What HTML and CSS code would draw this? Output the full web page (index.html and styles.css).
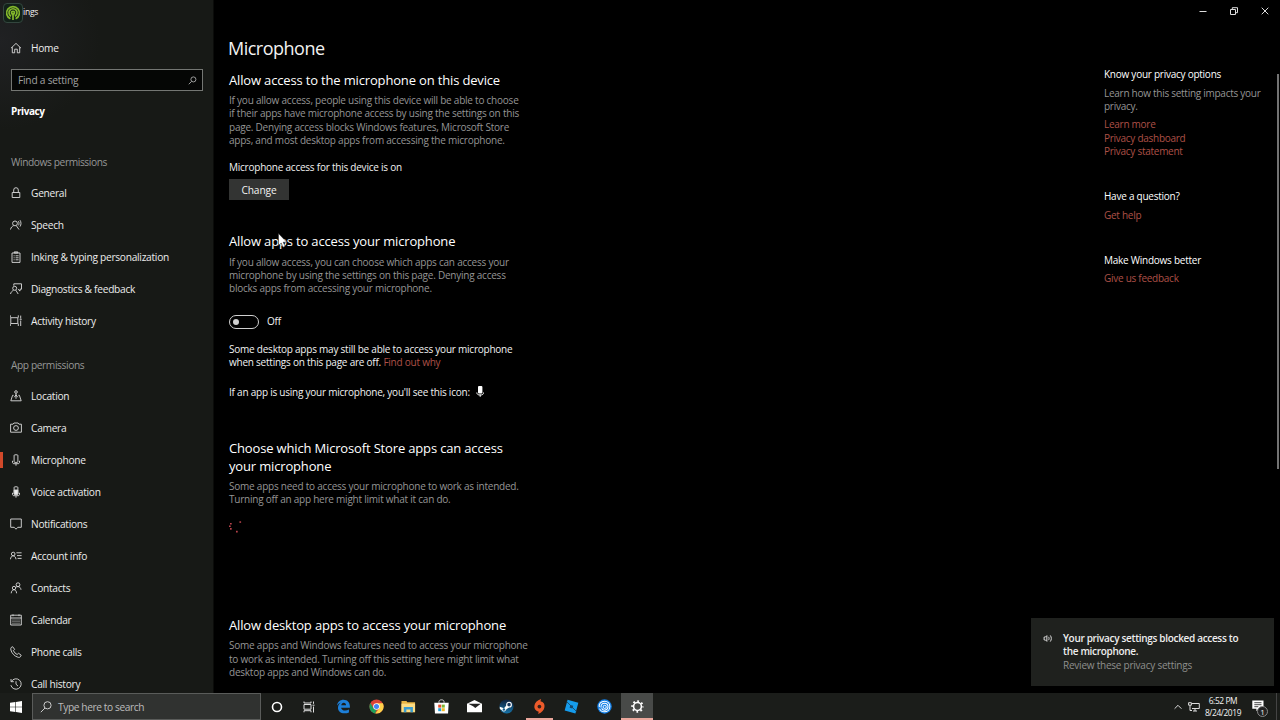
FILE: index.html
```html
<!DOCTYPE html>
<html lang="en">

<head>
    <meta charset="UTF-8">
    <meta name="viewport" content="width=device-width, initial-scale=1.0">
    <title>Settings</title>
    <link rel="stylesheet" href="styles.css">
</head>

<body>
    <div class="window">
        <nav class="sidebar">
            <div class="app-title">
                <svg class="badge" viewBox="0 0 20 20" fill="none">
                    <rect x=".5" y=".5" width="19" height="19" rx="3.5" fill="#122119" stroke="#33463e"/>
                    <g stroke="#83b72b" stroke-width="1.7">
                        <path d="M7.4 15.8a6.4 6.4 0 1 1 5.2 0"/>
                        <path d="M8 13.2a4 4 0 1 1 4 0"/>
                        <circle cx="10" cy="9.8" r="1.5"/>
                        <path d="M10 10v7"/>
                    </g>
                </svg>
                <span>ings</span>
            </div>

            <div class="nav-item home">
                <svg viewBox="0 0 12 12"><path d="M1 6.2 6 1.4l5 4.8M2.3 5.2v5.6h2.4V7.2h2.6v3.6h2.4V5.2"/></svg>
                <span>Home</span>
            </div>

            <div class="search">
                <span>Find a setting</span>
                <svg viewBox="0 0 10 10"><circle cx="6" cy="3.8" r="2.8"/><path d="M4 6 .8 9.2"/></svg>
            </div>

            <div class="category">Privacy</div>

            <div class="group">Windows permissions</div>
            <div class="nav-item">
                <svg viewBox="0 0 12 12"><path d="M2.2 5.5h7.6v5H2.2zM3.7 5.5V3a2.3 2.3 0 0 1 4.6 0v2.5"/></svg>
                <span>General</span>
            </div>
            <div class="nav-item">
                <svg viewBox="0 0 12 12"><circle cx="5" cy="4.4" r="2.4"/><path d="M.5 10.5c.5-2.2 1.7-3.2 3-3.7M6.4 6.8 9 10.5M8.4 2.2c.8 1.2.8 3 0 4.2M10 1.2c1.3 1.8 1.3 4.6 0 6.4"/></svg>
                <span>Speech</span>
            </div>
            <div class="nav-item">
                <svg viewBox="0 0 12 12"><path d="M2 2h8v9.4H2zM4.2 2V.9h3.6V2zM3.6 4.8h1M5.6 4.8h3M3.6 6.8h1M5.6 6.8h3M3.6 8.8h1M5.6 8.8h3"/></svg>
                <span>Inking &amp; typing personalization</span>
            </div>
            <div class="nav-item">
                <svg viewBox="0 0 12 12"><path d="M3.8 2.7V.8h7.7v5.4H10v1.9L8 6.2"/><circle cx="4.7" cy="5.3" r="2"/><path d="M.5 11c.5-2 1.6-3 3-3.7M5.8 7.2 8.2 11"/></svg>
                <span>Diagnostics &amp; feedback</span>
            </div>
            <div class="nav-item">
                <svg viewBox="0 0 12 12"><path d="M.8 2.7h7v5.8h-7zM.3.3v2.4M8.300.3v2.400M.3 8.500v2.500M8.300 8.500v2.500M10.700.6v3M10.700 5.500v5.500M9.700 4.300h2"/></svg>
                <span>Activity history</span>
            </div>

            <div class="group">App permissions</div>
            <div class="nav-item">
                <svg viewBox="0 0 12 12"><circle cx="6" cy="2" r="1.3"/><path d="M6 3.3v5.500M3.600 5.300h-1l-1.800 5.500h10.400L9.400 5.300h-1M4.300 7.200 6 4.800l1.700 2.400"/></svg>
                <span>Location</span>
            </div>
            <div class="nav-item">
                <svg viewBox="0 0 12 12"><path d="M.6 2.2h2.500l.8-1.200h4.200l.8 1.200h2.500v8H.6z"/><circle cx="6" cy="6" r="2.4"/></svg>
                <span>Camera</span>
            </div>
            <div class="nav-item active">
                <svg viewBox="0 0 12 12"><rect x="4.1" y=".8" width="3.8" height="7.6" rx=".8"/><path d="M2.5 6.8v1.4c0 1 .6 1.5 1.5 1.5h4c.9 0 1.5-.5 1.5-1.5V6.8M6 9.7v2"/></svg>
                <span>Microphone</span>
            </div>
            <div class="nav-item">
                <svg viewBox="0 0 12 12"><rect x="4.1" y=".8" width="3.8" height="7.6" rx=".8"/><path d="M4.2 4h3.6v4.2H4.2z" fill="#eee"/><path d="M2.5 6.8v1.4c0 1 .6 1.5 1.5 1.5h4c.9 0 1.5-.5 1.5-1.5V6.8M6 9.7v2"/></svg>
                <span>Voice activation</span>
            </div>
            <div class="nav-item">
                <svg viewBox="0 0 12 12"><path d="M.7 1h10.600v8.300H7.800L6 11.200 4.200 9.300H.7z"/></svg>
                <span>Notifications</span>
            </div>
            <div class="nav-item">
                <svg viewBox="0 0 12 12"><circle cx="3.2" cy="4" r="1.8"/><path d="M.4 9.300c.3-2 1.200-3.500 2.800-3.500S5.700 7.300 6 9.300M6.400 2.800h5.200M7 5.600h4.600M7.600 8.400h4"/></svg>
                <span>Account info</span>
            </div>
            <div class="nav-item">
                <svg viewBox="0 0 12 12"><circle cx="4" cy="6" r="1.7"/><circle cx="8" cy="2.7" r="1.9"/><path d="M1.2 11.3c.2-2.200 1.200-3.600 2.800-3.600s2.400 1.400 2.600 3.600M5.800 5.300C6.400 4.800 7.200 4.600 8 4.600c1.700 0 2.700 1.200 3 3.200"/></svg>
                <span>Contacts</span>
            </div>
            <div class="nav-item">
                <svg viewBox="0 0 12 12"><path d="M.7 1.200h10.600v9.800H.7zM.7 4h10.600M3 .4v1.800M9 .4v1.800"/><path d="M2 6h8M2 7.700h8M2 9.300h8" opacity=".5"/></svg>
                <span>Calendar</span>
            </div>
            <div class="nav-item">
                <svg viewBox="0 0 12 12"><path d="M1.200 1.500 2.600.7l2 2.600-1.200 1.400c.8 1.700 2 2.900 3.700 3.800l1.500-1.200 2.600 1.900-.8 1.600c-.6.7-1.700.7-2.600.4C4.300 10 1.800 7.300.9 4c-.2-1-.2-1.900.3-2.500z"/></svg>
                <span>Phone calls</span>
            </div>
            <div class="nav-item">
                <svg viewBox="0 0 12 12"><path d="M1.400 3.500a5.200 5.200 0 1 1-.5 3.700M1 1v2.700h2.800M6 3.200v3l2 1.900"/></svg>
                <span>Call history</span>
            </div>
        </nav>

        <main class="content">
            <h1>Microphone</h1>

            <h2>Allow access to the microphone on this device</h2>
            <p>If you allow access, people using this device will be able to choose<br>if their apps have microphone access by using the settings on this<br>page. Denying access blocks Windows features, Microsoft Store<br>apps, and most desktop apps from accessing the microphone.</p>
            <p class="status">Microphone access for this device is on</p>
            <button class="change">Change</button>

            <h2 class="apps">Allow apps to access your microphone</h2>
            <p>If you allow access, you can choose which apps can access your<br>microphone by using the settings on this page. Denying access<br>blocks apps from accessing your microphone.</p>
            <div class="toggle-row">
                <span class="toggle"></span>
                <span class="state">Off</span>
            </div>
            <p class="note">Some desktop apps may still be able to access your microphone<br>when settings on this page are off. <a>Find out why</a></p>
            <p class="icon-note">If an app is using your microphone, you'll see this icon:
                <svg viewBox="0 0 8 12"><rect x="2" y="0" width="4.4" height="7.500" rx="1" fill="#fff"/><path d="M.8 6.500C1 8.500 2 9 4.200 9s3.200-.5 3.400-2.500M4.200 8.500v2.300" stroke="#fff" fill="none"/></svg>
            </p>

            <h2 class="store">Choose which Microsoft Store apps can access<br>your microphone</h2>
            <p>Some apps need to access your microphone to work as intended.<br>Turning off an app here might limit what it can do.</p>
            <svg class="spinner" viewBox="0 0 14 12" fill="#b8434b"><rect x="1" y="2" width="1.7" height="1.5"/><rect x="0" y="4.5" width="1.7" height="1.5"/><rect x="1" y="7" width="1.7" height="1.7"/><rect x="10.4" y=".3" width="1.7" height="1.5"/><rect x="7" y="9.8" width="1.7" height="1.7"/></svg>

            <h2 class="desktop">Allow desktop apps to access your microphone</h2>
            <p>Some apps and Windows features need to access your microphone<br>to work as intended. Turning off this setting here might limit what<br>desktop apps and Windows can do.</p>
        </main>

        <aside class="help">
            <h3>Know your privacy options</h3>
            <p>Learn how this setting impacts your<br>privacy.</p>
            <div class="links">
                <a>Learn more</a>
                <a>Privacy dashboard</a>
                <a>Privacy statement</a>
            </div>
            <h3>Have a question?</h3>
            <div class="links"><a>Get help</a></div>
            <h3>Make Windows better</h3>
            <div class="links"><a>Give us feedback</a></div>
        </aside>
    </div>

    <div class="window-buttons">
        <svg viewBox="0 0 10 10"><path d="M1.5 5.5h7"/></svg>
        <svg viewBox="0 0 10 10"><path d="M1.5 3.5h5v5h-5zM3.3 3.3V1.700h5.200v5H6.700"/></svg>
        <svg viewBox="0 0 10 10"><path d="m1.700 1.700 6.600 6.600M8.300 1.700 1.700 8.300"/></svg>
    </div>

    <div class="scrollbar"></div>

    <svg class="cursor" viewBox="0 0 10 16"><path d="M.5.5v12l2.700-2.500 1.900 4.200 2-.9-1.900-4.100h3.600z" fill="#fff" stroke="#222" stroke-width=".5"/></svg>

    <div class="toast">
        <svg viewBox="0 0 10 10"><path d="M1 3.700h1.200L3.500 2.400v5.200L2.200 6.300H1zM5 3.500c.7 1 .7 2 0 3M6.600 2.200c1.300 1.700 1.300 3.900 0 5.600"/></svg>
        <div>
            <strong>Your privacy settings blocked access to<br>the microphone.</strong>
            <span>Review these privacy settings</span>
        </div>
    </div>

    <footer class="taskbar">
        <div class="start">
            <svg viewBox="0 0 12 12" fill="#fff"><path d="M0 1.700 5.400 1v4.700H0zM6 .9 12 0v5.700H6zM0 6.300h5.400V11L0 10.300zM6 6.300h6V12l-6-.9z"/></svg>
        </div>
        <div class="task-search">
            <svg viewBox="0 0 12 12"><circle cx="7.5" cy="4.3" r="3.6"/><path d="M5 7 .8 11.2"/></svg>
            <span>Type here to search</span>
        </div>
        <div class="system">
            <svg viewBox="0 0 12 12" fill="none" stroke="#fff" stroke-width="1.6"><circle cx="6" cy="6" r="4.5"/></svg>
            <svg viewBox="0 0 12 12" fill="none" stroke="#ddd"><path d="M1 3.500h7v4.700H1zM1 .5v1.500h7V.5M1 11.300V9.700h7v1.600M10.500.5v2.300M10.500 5.500v6M9.500 4.200h2"/></svg>
        </div>
        <div class="apps-bar">
            <div class="task">
                <!-- edge -->
                <svg viewBox="0 0 16 16" fill="#1d7fd8"><path d="M1 7C1.700 3 4.500.8 8 .8c4.300 0 6.800 3 6.800 7v1.500H5.500c.2 2 2 3 4.200 3 1.500 0 2.900-.4 4.100-1.100v3.100c-1.300.7-2.900 1-4.800 1-4.200 0-6.900-2.300-6.900-6 0-2.500 1.400-4.500 3.700-5.500C3.800 4.300 2.200 5.300 1 7zm4.600-.4h5.100c0-1.700-.9-2.700-2.400-2.700S5.900 5 5.600 6.600z"/></svg>
            </div>
            <div class="task">
                <!-- chrome -->
                <svg viewBox="0 0 16 16"><circle cx="8" cy="8" r="7.5" fill="#db4437"/><path d="M1.500 4.300 4.900 10l3.300 1.500-1.700 3.900A7.500 7.500 0 0 1 1.500 4.300z" fill="#1da05a"/><path d="M8 4.500h6.700A7.500 7.500 0 0 1 6.700 15.400L11 9.800z" fill="#fdd14b"/><circle cx="8" cy="8" r="3.5" fill="#fff"/><circle cx="8" cy="8" r="2.7" fill="#4285f4"/></svg>
            </div>
            <div class="task">
                <!-- file explorer -->
                <svg viewBox="0 0 16 16"><path d="M.5 2h5.300l1 1.500H15V14H.5z" fill="#e9b544"/><path d="M.5 5H15v9H.5z" fill="#fbdc83"/><path d="M3 8.500h9.700V14H10v-2.700H5.700V14H3z" fill="#3a9ccf"/></svg>
            </div>
            <div class="task">
                <!-- store -->
                <svg viewBox="0 0 16 16"><path d="M5.300 4V2.800C5.300.2 10.700.2 10.700 2.800V4" fill="none" stroke="#ddd"/><path d="M.3 4h15.400l-.7 11.500H1z" fill="#fff"/><path fill="#e74c2b" d="M4.500 6h3.200v3.200H4.500z"/><path fill="#7db72f" d="M8.300 6h3.200v3.200H8.300z"/><path fill="#23a0db" d="M4.500 9.800h3.200V13H4.500z"/><path fill="#f5b921" d="M8.300 9.800h3.200V13H8.300z"/></svg>
            </div>
            <div class="task">
                <!-- mail -->
                <svg viewBox="0 0 16 16"><path d="M0 5 8 1l8 4v9H0z" fill="#fff"/><path d="M1.300 5h13.400L8.800 9.500 6.500 7.600z" fill="#222"/></svg>
            </div>
            <div class="task">
                <!-- steam -->
                <svg viewBox="0 0 16 16"><defs><linearGradient id="steam" x1="0" y1="0" x2="0" y2="1"><stop offset="0" stop-color="#10203b"/><stop offset="1" stop-color="#1673a8"/></linearGradient></defs><circle cx="8" cy="8" r="7.5" fill="url(#steam)"/><path d="m.8 8.300 4.500 1.600 3.200-3.700 2.400 2.600-3.500 2.700a2.200 2.200 0 0 1-4.200.4L.9 10.700z" fill="#fff"/><circle cx="10.7" cy="6" r="2.5" fill="#18375d" stroke="#fff" stroke-width="1.2"/><circle cx="5.2" cy="11.2" r="1.3" fill="#1b5e8d"/></svg>
            </div>
            <div class="task running">
                <!-- origin -->
                <svg viewBox="0 0 16 16"><path d="M9.700.1 9 2.300a5.600 5.600 0 0 1 4.300 6.200c-.4 3.400-2.600 5.800-6.800 7.400l.7-2.300A5.600 5.600 0 0 1 2.500 7.400C2.900 4 5.300 1.600 9.700.1z" fill="#ec5b2b"/><circle cx="7.9" cy="8" r="2" fill="#34201a"/></svg>
            </div>
            <div class="task">
                <!-- roblox studio -->
                <svg viewBox="0 0 16 16"><path d="m3.800.8 11.500 3.100-3.100 11.500L.7 12.300z" fill="#159cec"/><path d="m2.600 2.500 10.900 11" stroke="#1b3549" stroke-width=".8"/><path d="m6.800 6.300 3 .8-.8 3-3-.8z" fill="#17466a"/></svg>
            </div>
            <div class="task">
                <!-- ubisoft connect -->
                <svg viewBox="0 0 16 16" fill="none"><circle cx="8" cy="8" r="7.7" fill="#1480e8"/><g stroke="#fff" stroke-width="1.1"><path d="M2.500 8.700C1.700 5 4.300 2.300 8 2.300c3.600 0 5.900 2.500 5.700 6-.2 3-2.500 5.400-5.700 5.400-2.600 0-4.500-1.500-5.300-3.400"/><path d="M4.400 9.300C3.700 6.500 5.500 4.500 8 4.500s4.100 2 3.700 4.300C11.300 11 9.700 11.900 8 11.900c-1.500 0-2.600-.9-3-2"/></g><circle cx="8.2" cy="8.4" r="1.7" stroke="#fff"/></svg>
            </div>
            <div class="task running current">
                <!-- settings -->
                <svg viewBox="0 0 16 16" fill="none" stroke="#fff"><circle cx="8" cy="8" r="4.2" stroke-width="1.7"/><circle cx="8" cy="8" r="5.700" stroke-width="1.900" stroke-dasharray="1.900 2.577" stroke-dashoffset=".95"/></svg>
            </div>
        </div>

        <div class="tray">
            <svg class="chevron" viewBox="0 0 8 8"><path d="m.6 5.700 3.400-3.400 3.400 3.400"/></svg>
            <svg class="network" viewBox="0 0 12 10"><path d="M4 1.500h7.300v5H4M5 9h4M7 6.500V9M.6.700h2.800v2.500H.6zM2 3.200v5.300h2"/></svg>
            <div class="clock">6:52 PM<br>8/24/2019</div>
            <div class="action-center">
                <svg viewBox="0 0 12 12"><path d="M.3.5h11.200v8.300H6.800L4.400 11.300V8.800H.3z" fill="#fff"/><path d="M2.300 2.700H9.500M2.300 4.700H9.500M2.300 6.700h4" stroke="#333" stroke-width=".9"/></svg>
                <span class="count">1</span>
            </div>
        </div>
    </footer>
</body>

</html>
```
FILE: styles.css
```css
* {
    margin: 0;
    padding: 0;
    box-sizing: border-box;
}

body {
    width: 1280px;
    height: 720px;
    overflow: hidden;
    background-color: #000;
    color: #f2f2f2;
    font-family: "Open Sans", "Noto Sans", sans-serif;
    font-size: 10px;
    line-height: 13.33px;
    white-space: nowrap;
    letter-spacing: -0.23px;
}

.window {
    display: flex;
    height: 693px;
}

/* Sidebar */
.sidebar {
    width: 214px;
    height: 693px;
    overflow: hidden;
    background-color: #171916;
    background-image: radial-gradient(ellipse 100px 90px at 0 40px, #202123, #171916);
    border-right: 1px solid #0b0c0a;
}

.app-title {
    display: flex;
    height: 32px;
    padding: 3px 0 0 3px;
    font-size: 8.5px;
    line-height: 17px;
}

.badge {
    width: 20px;
    height: 20px;
}

.nav-item {
    display: flex;
    align-items: center;
    height: 32px;
    padding-left: 10px;
    gap: 9px;
    font-size: 10.2px;
    letter-spacing: -0.28px;
    color: #ececec;
}

.nav-item span {
    padding-top: 2px;
}

.nav-item svg {
    width: 12px;
    height: 12px;
    fill: none;
    stroke: #dcdcdc;
    stroke-width: 0.9;
}

.nav-item.active {
    background: linear-gradient(#d2492a, #d2492a) left center / 3px 16px no-repeat;
}

.search {
    display: flex;
    align-items: center;
    justify-content: space-between;
    width: 192px;
    height: 22px;
    margin: 5px 0 0 11px;
    padding: 1px 5px 0 6px;
    background-color: #050605;
    border: 1px solid #747673;
    color: #a2a2a2;
    font-size: 10.2px;
}

.search svg {
    width: 9px;
    height: 9px;
    fill: none;
    stroke: #aaa;
}

.category {
    margin: 13px 0 0 11px;
    font-size: 10px;
    line-height: 14px;
    font-weight: 700;
    letter-spacing: -0.4px;
    color: #fff;
}

.group {
    height: 14px;
    line-height: 14px;
    font-size: 10.2px;
    letter-spacing: -0.4px;
    color: #969796;
}

.category + .group {
    margin: 37px 0 8px 11px;
}

.nav-item + .group {
    margin: 21px 0 8px 11px;
}

/* Main page */
.content {
    width: 874px;
    padding: 34px 0 0 15px;
}

h1 {
    margin-left: -1px;
    font-size: 18px;
    font-weight: 400;
    line-height: 28px;
    letter-spacing: -0.5px;
}

h2 {
    margin-top: 9px;
    font-size: 13px;
    font-weight: 400;
    line-height: 18px;
    letter-spacing: -0.16px;
    color: #fff;
}

.content p {
    color: #959595;
}

h2 + p {
    margin-top: 5px;
}

.content .status,
.content .note,
.content .icon-note {
    color: #f2f2f2;
}

.content .status {
    margin-top: 13.5px;
}

.change {
    display: block;
    width: 60px;
    height: 21px;
    margin-top: 4.5px;
    padding-top: 3px;
    background-color: #333433;
    border: none;
    color: #f2f2f2;
    font: inherit;
    font-size: 10.2px;
    letter-spacing: -0.1px;
}

.apps {
    margin-top: 32px;
}

.apps + p {
    margin-top: 6px;
}

.toggle-row {
    display: flex;
    align-items: center;
    gap: 8px;
    height: 14px;
    margin-top: 19px;
}

.toggle {
    display: flex;
    align-items: center;
    width: 30px;
    height: 14px;
    padding-left: 3px;
    border: 1.5px solid #d0d0d0;
    border-radius: 7px;
}

.toggle::before {
    content: "";
    width: 6px;
    height: 6px;
    border-radius: 50%;
    background-color: #d0d0d0;
}

.state {
    padding-top: 1px;
}

.content .note {
    margin-top: 14px;
}

.content .icon-note {
    display: flex;
    align-items: center;
    gap: 6px;
    margin-top: 16.5px;
}

.icon-note svg {
    width: 8px;
    height: 12px;
}

.store {
    margin-top: 40px;
}

.spinner {
    display: block;
    width: 14px;
    height: 12px;
    margin-top: 14.5px;
}

.desktop {
    margin-top: 83px;
}

a {
    color: #ad5047;
}

/* Right column */
.help {
    padding-top: 68px;
    padding-left: 16px;
    letter-spacing: -0.27px;
}

h3 {
    font-size: 10px;
    font-weight: 400;
    letter-spacing: -0.25px;
    color: #fff;
}

.help p {
    margin-top: 5.5px;
    color: #959595;
}

.links {
    display: flex;
    flex-direction: column;
    margin-top: 5px;
}

.links + h3 {
    margin-top: 32px;
}

.window-buttons {
    position: absolute;
    top: 6px;
    right: 10px;
    display: flex;
    gap: 21px;
}

.window-buttons svg {
    width: 10px;
    height: 10px;
    fill: none;
    stroke: #ddd;
}

.scrollbar {
    position: absolute;
    top: 74px;
    right: 1px;
    width: 2px;
    height: 395px;
    background-color: #737373;
}

.cursor {
    position: absolute;
    left: 278px;
    top: 233px;
    width: 10px;
    height: 16px;
}

.toast {
    position: absolute;
    left: 1031px;
    top: 618px;
    display: flex;
    gap: 9px;
    width: 243px;
    height: 68px;
    padding: 14px 0 0 12px;
    background-color: #1f211e;
}

.toast svg {
    width: 11px;
    height: 11px;
    margin-top: 1px;
    fill: none;
    stroke: #ddd;
    stroke-width: 0.9;
}

.toast strong,
.toast span {
    display: block;
}

.toast strong {
    font-weight: 600;
    letter-spacing: -0.32px;
    color: #eee;
}

.toast span {
    color: #8e8f8d;
}

/* Taskbar */
.taskbar {
    display: flex;
    height: 27px;
    background-color: #1b1d1a;
}

.start {
    display: flex;
    align-items: center;
    justify-content: center;
    width: 32px;
}

.start svg {
    width: 12px;
    height: 12px;
}

.task-search {
    display: flex;
    align-items: center;
    gap: 6px;
    width: 229px;
    padding-left: 7px;
    background-color: #303230;
    border: 1px solid #5a5c5a;
    color: #bcbcbc;
    font-size: 10.2px;
    letter-spacing: -0.4px;
}

.task-search span {
    padding-top: 2px;
}

.task-search svg {
    width: 12px;
    height: 12px;
    fill: none;
    stroke: #ccc;
}

.system {
    display: flex;
    align-items: center;
    gap: 20px;
    padding: 0 12px 0 10px;
}

.system svg {
    width: 12px;
    height: 12px;
}

.apps-bar {
    display: flex;
    padding-left: 0.4px;
}

.task {
    display: flex;
    align-items: center;
    justify-content: center;
    width: 32.6px;
}

.task svg {
    width: 15px;
    height: 15px;
}

.task.running {
    background: linear-gradient(#eaa79c, #eaa79c) center bottom / 27px 2px no-repeat;
}

.task.running.current {
    background-color: #484a48;
    background-size: 100% 2px;
}

.tray {
    display: flex;
    align-items: center;
    margin-left: auto;
    padding-right: 4px;
    border-right: 1px solid #444;
    margin-right: 3px;
}

.tray > svg {
    fill: none;
    stroke: #ddd;
}

.chevron {
    width: 8px;
    height: 8px;
}

.network {
    width: 12px;
    height: 10px;
    margin-left: 6px;
}

.clock {
    width: 42px;
    margin-left: 2px;
    font-size: 8.4px;
    line-height: 12px;
    text-align: center;
    letter-spacing: -0.4px;
}

.action-center {
    position: relative;
    width: 20px;
    height: 20px;
    margin-left: 8px;
}

.action-center svg {
    width: 12px;
    height: 12px;
    margin-top: 3px;
}

.count {
    position: absolute;
    left: 5px;
    top: 9px;
    width: 11px;
    height: 11px;
    border: 1px solid #888;
    border-radius: 50%;
    background-color: #222;
    font-size: 8px;
    line-height: 9px;
    text-align: center;
}
```
